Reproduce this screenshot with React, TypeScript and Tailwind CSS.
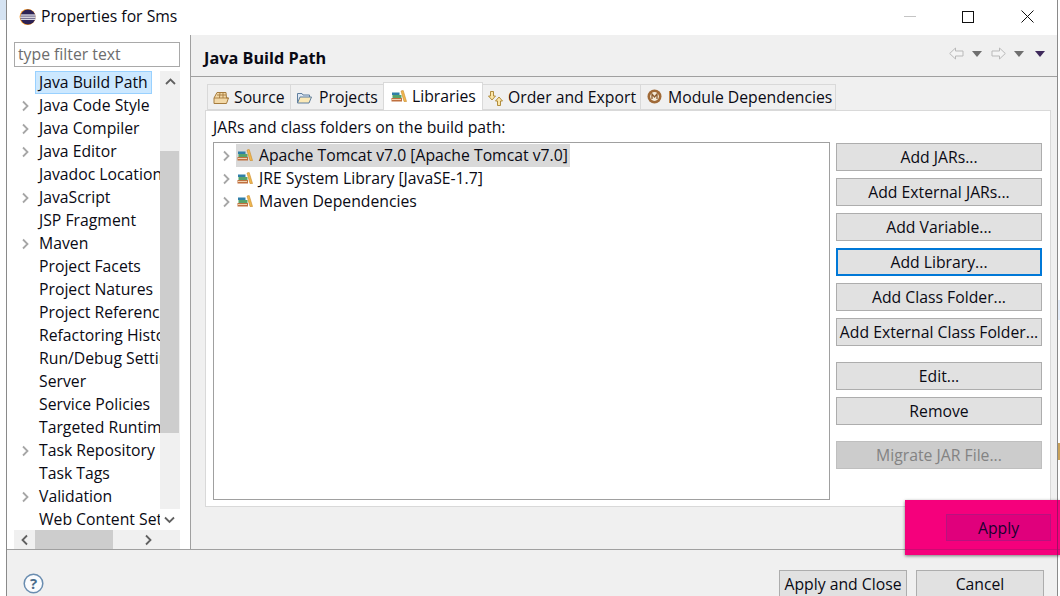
import React from "react";

const treeItems = [
  { label: "Java Build Path", arrow: false, selected: true },
  { label: "Java Code Style", arrow: true },
  { label: "Java Compiler", arrow: true },
  { label: "Java Editor", arrow: true },
  { label: "Javadoc Location", arrow: false },
  { label: "JavaScript", arrow: true },
  { label: "JSP Fragment", arrow: false },
  { label: "Maven", arrow: true },
  { label: "Project Facets", arrow: false },
  { label: "Project Natures", arrow: false },
  { label: "Project References", arrow: false },
  { label: "Refactoring History", arrow: false },
  { label: "Run/Debug Settings", arrow: false },
  { label: "Server", arrow: false },
  { label: "Service Policies", arrow: false },
  { label: "Targeted Runtimes", arrow: false },
  { label: "Task Repository", arrow: true },
  { label: "Task Tags", arrow: false },
  { label: "Validation", arrow: true },
  { label: "Web Content Settings", arrow: false },
];

const Chevron = ({ dir = "right", color = "#a6a6a6" }: { dir?: string; color?: string }) => {
  const d =
    dir === "right"
      ? "M3 1.5 L7.5 6 L3 10.5"
      : dir === "left"
      ? "M8 1.5 L3.5 6 L8 10.5"
      : dir === "up"
      ? "M1 8 L5.5 3.5 L10 8"
      : "M1 3.5 L5.5 8 L10 3.5";
  return (
    <svg width="11" height="12" viewBox="0 0 11 12" fill="none">
      <path d={d} stroke={color} strokeWidth="1.8" />
    </svg>
  );
};

const EclipseLogo = () => (
  <svg width="18" height="18" viewBox="0 0 18 18" className="shrink-0">
    <circle cx="9.6" cy="9" r="8" fill="#f7941e" />
    <circle cx="10" cy="9" r="7.6" fill="#2c2255" />
    <rect x="2.6" y="6.4" width="15" height="1.3" fill="#e8e8f0" />
    <rect x="2.2" y="8.5" width="15.6" height="1.3" fill="#ffffff" />
    <rect x="2.6" y="10.6" width="15" height="1.3" fill="#e8e8f0" />
  </svg>
);

const LibraryIcon = () => (
  <svg width="16" height="16" viewBox="0 0 16 16" className="shrink-0">
    <rect x="1" y="3.5" width="7.5" height="2.5" fill="#2f7fa8" />
    <rect x="1.5" y="6" width="9" height="3" fill="#58a36a" />
    <rect x="0.5" y="9" width="10.5" height="3.5" fill="#c0703f" />
    <rect x="1" y="10" width="9" height="1" fill="#f0d2b0" />
    <path d="M10 2 L12.2 1.5 L15.5 12.5 L13 12.5 Z" fill="#f0b850" stroke="#c98a2a" strokeWidth="0.6" />
  </svg>
);

const SourceIcon = () => (
  <svg width="17" height="16" viewBox="0 0 17 16" className="shrink-0">
    <path d="M1 13.5 L1 8 L4 2.5 L13 2.5 L13.5 8 L15.5 8 L13.5 13.5 Z" fill="#f3d9a8" stroke="#a67c3e" />
    <path d="M4 5 L13 5 M7 2.5 L6.5 8 M10 2.5 L10 8 M1 8 L15.5 8" stroke="#a67c3e" strokeWidth="0.9" />
  </svg>
);

const FolderIcon = () => (
  <svg width="17" height="16" viewBox="0 0 17 16" className="shrink-0">
    <path d="M1.5 13 L1.5 3.5 L6 3.5 L7 5 L13.5 5 L13.5 7" fill="#dfe8f3" stroke="#5f7f9f" />
    <path d="M1.5 13 L4 7 L15.5 7 L13 13 Z" fill="#fbe9b7" stroke="#5f7f9f" />
  </svg>
);

const OrderIcon = () => (
  <svg width="17" height="17" viewBox="0 0 17 17" fill="#fbe6a8" stroke="#a9822e" strokeWidth="0.9" className="shrink-0">
    <path d="M3.5 1.5 L6.5 1.5 L6.5 6 L8.5 6 L5 10 L1.5 6 L3.5 6 Z" />
    <path d="M10.5 15.5 L13.5 15.5 L13.5 11 L15.5 11 L12 7 L8.5 11 L10.5 11 Z" />
  </svg>
);

const ModuleIcon = () => (
  <svg width="15" height="15" viewBox="0 0 15 15" className="mb-[3px] shrink-0">
    <circle cx="7.5" cy="7.5" r="7" fill="#a06a38" />
    <circle cx="7.5" cy="7.5" r="4.4" fill="#f4ead8" />
    <path d="M5 10 L5 5 L7.5 8 L10 5 L10 10" fill="none" stroke="#8a5a2e" strokeWidth="1.3" />
  </svg>
);

const NavArrow = ({ flip = false }: { flip?: boolean }) => (
  <svg width="15" height="13" viewBox="0 0 15 13" className={flip ? "-scale-x-100" : ""}>
    <path d="M0.7 6.5 L6.5 1 L6.5 4 L14 4 L14 9 L6.5 9 L6.5 12 Z" fill="#f4f4f4" stroke="#b9b9b9" />
  </svg>
);

const NavCaret = ({ color = "#6f6f6f" }: { color?: string }) => (
  <svg width="10" height="6" viewBox="0 0 10 6">
    <path d="M0 0 L10 0 L5 6 Z" fill={color} />
  </svg>
);

const Tab = ({
  label,
  icon,
  active,
  className,
}: {
  label: string;
  icon: React.ReactNode;
  active?: boolean;
  className: string;
}) => (
  <div
    className={`flex items-center border border-[#d9d9d9] -mr-px ${className} ${
      active ? "z-10 h-[28px] border-b-0 bg-white" : "h-[26px] bg-[#f0f0f0] pt-[2px]"
    }`}
  >
    {icon}
    <span className="whitespace-nowrap">{label}</span>
  </div>
);

const Button = ({
  label,
  className = "",
  focus,
  disabled,
}: {
  label: string;
  className?: string;
  focus?: boolean;
  disabled?: boolean;
}) => (
  <div
    className={`flex h-[28px] items-center justify-center whitespace-nowrap pt-[2px] ${
      focus
        ? "border-2 border-[#0078d7] bg-[#e1e1e1]"
        : disabled
        ? "border border-[#bfbfbf] bg-[#cccccc] text-[#838383]"
        : "border border-[#adadad] bg-[#e1e1e1]"
    } ${className}`}
  >
    {label}
  </div>
);

export default function App() {
  return (
    <div
      className="relative flex h-[596px] w-[1060px] overflow-hidden bg-white text-[15.75px] text-[#0a0a14]"
      style={{ fontFamily: '"Open Sans", "Noto Sans", sans-serif' }}
    >
      <div className="w-[6px] shrink-0 bg-white">
        <div className="h-[20px] bg-[#d5e3f2]" />
      </div>
      <div className="flex w-[1052px] shrink-0 flex-col border-x border-[#8a8a8a]">
        {/* title bar */}
        <div className="flex h-[35px] shrink-0 items-center bg-white pb-[2px] pl-[11px]">
          <EclipseLogo />
          <span className="ml-[5px]">Properties for Sms</span>
          <div className="ml-auto flex items-center pr-[23px]">
            <div className="h-px w-[12px] bg-[#c4c4c4]" />
            <div className="ml-[46px] h-[12px] w-[12px] border border-[#111]" />
            <svg className="ml-[47px]" width="13" height="13" viewBox="0 0 13 13">
              <path d="M0.5 0.5 L12.5 12.5 M12.5 0.5 L0.5 12.5" stroke="#111" strokeWidth="1" />
            </svg>
          </div>
        </div>

        <div className="flex min-h-0 flex-1">
          {/* left tree */}
          <div className="flex w-[183px] shrink-0 flex-col bg-white pl-[7px] pr-[10px]">
            <div className="mt-[7px] flex h-[25px] shrink-0 items-center border border-[#a9a9a9] pl-[3px] text-[#6d6d6d]">
              type filter text
            </div>
            <div className="mt-[4px] flex h-[459px] shrink-0">
              <div className="w-[146px] overflow-hidden">
                {treeItems.map((item) => (
                  <div key={item.label} className="flex h-[23px] items-center">
                    <span className="flex w-[21px] shrink-0 justify-center pl-[2px]">
                      {item.arrow && <Chevron />}
                    </span>
                    <span
                      className={`flex h-[23px] items-center whitespace-nowrap border px-[3px] ${
                        item.selected ? "border-[#99d1ff] bg-[#cce8ff]" : "border-transparent"
                      }`}
                    >
                      {item.label}
                    </span>
                  </div>
                ))}
              </div>
              <div className="flex w-[20px] shrink-0 flex-col bg-[#f0f0f0]">
                <div className="flex h-[21px] items-center justify-center">
                  <Chevron dir="up" color="#606060" />
                </div>
                <div className="mt-[59px] h-[282px] w-[19px] bg-[#cdcdcd]" />
                <div className="mt-auto flex h-[21px] items-center justify-center bg-white pr-[2px]">
                  <Chevron dir="down" color="#606060" />
                </div>
              </div>
            </div>
            <div className="flex h-[19px] shrink-0 items-center bg-[#f0f0f0]">
              <div className="flex w-[21px] justify-center">
                <Chevron dir="left" color="#606060" />
              </div>
              <div className="h-[19px] w-[78px] bg-[#cdcdcd]" />
              <div className="ml-[25px] flex w-[21px] justify-center">
                <Chevron color="#606060" />
              </div>
            </div>
          </div>

          {/* right pane */}
          <div className="flex min-w-0 flex-1 flex-col border-l border-[#a0a0a0] bg-[#f0f0f0]">
            <div className="flex h-[42px] shrink-0 items-center border-b border-[#a0a0a0] pl-[13px] pr-[12px]">
              <span className="mt-[5px] text-[16.25px] font-bold">Java Build Path</span>
              <div className="mb-[4px] ml-auto flex items-center">
                <NavArrow />
                <span className="ml-[8px]"><NavCaret /></span>
                <span className="ml-[9px]"><NavArrow flip /></span>
                <span className="ml-[8px]"><NavCaret /></span>
                <span className="ml-[11px]"><NavCaret color="#3f2a5c" /></span>
              </div>
            </div>
            <div className="flex h-[33px] shrink-0 items-end pl-[16px]">
              <Tab label="Source" icon={<SourceIcon />} className="w-[84px] gap-[4px] pl-[5px]" />
              <Tab label="Projects" icon={<FolderIcon />} className="w-[94px] gap-[6px] pl-[5px]" />
              <Tab label="Libraries" icon={<LibraryIcon />} className="w-[100px] gap-[5px] pl-[7px]" active />
              <Tab label="Order and Export" icon={<OrderIcon />} className="w-[159px] gap-[4px] pl-[4px]" />
              <Tab label="Module Dependencies" icon={<ModuleIcon />} className="w-[196px] gap-[6px] pl-[6px]" />
            </div>
            <div className="ml-[14px] mr-[6px] flex h-[397px] shrink-0 flex-col border border-[#d9d9d9] bg-white pl-[7px]">
              <div className="mt-[6px] h-[21px] leading-[21px]">JARs and class folders on the build path:</div>
              <div className="mt-[4px] flex">
                <div className="h-[358px] w-[617px] shrink-0 border border-[#a0a0a0] pt-[1px]">
                  {[
                    { label: "Apache Tomcat v7.0 [Apache Tomcat v7.0]", selected: true },
                    { label: "JRE System Library [JavaSE-1.7]" },
                    { label: "Maven Dependencies" },
                  ].map((row) => (
                    <div key={row.label} className="flex h-[23px] items-center pl-[7px]">
                      <span className="flex w-[15px] shrink-0">
                        <Chevron />
                      </span>
                      <span
                        className={`flex h-[23px] items-center gap-[6px] whitespace-nowrap pr-[2px] ${
                          row.selected ? "bg-[#d9d9d9]" : ""
                        }`}
                      >
                        <span className="ml-[1px]">
                          <LibraryIcon />
                        </span>
                        {row.label}
                      </span>
                    </div>
                  ))}
                </div>
                <div className="ml-[6px] mt-[1px] flex w-[206px] shrink-0 flex-col gap-[7px]">
                  <Button label="Add JARs..." />
                  <Button label="Add External JARs..." />
                  <Button label="Add Variable..." />
                  <Button label="Add Library..." focus />
                  <Button label="Add Class Folder..." />
                  <Button label="Add External Class Folder..." />
                  <Button label="Edit..." className="mt-[9px]" />
                  <Button label="Remove" />
                  <Button label="Migrate JAR File..." className="mt-[9px]" disabled />
                </div>
              </div>
            </div>
          </div>
        </div>

        {/* bottom bar */}
        <div className="flex h-[47px] shrink-0 border-t border-[#a0a0a0] bg-[#f0f0f0] pl-[16px] pr-[13px] pt-[20px]">
          <svg className="mt-[3px]" width="21" height="21" viewBox="0 0 21 21">
            <circle cx="10.5" cy="10.5" r="9.3" fill="#fbfcfe" stroke="#6a8db0" strokeWidth="1.5" />
            <text x="10.5" y="16" textAnchor="middle" fontSize="15" fontWeight="700" fill="#4a6c8c">?</text>
          </svg>
          <div className="ml-auto flex gap-[9px]">
            <Button label="Apply and Close" className="w-[128px]" />
            <Button label="Cancel" className="w-[128px]" />
          </div>
        </div>
      </div>
      <div className="flex w-[2px] shrink-0 flex-col bg-white">
        <div className="mt-[300px] h-[20px] bg-[#e6eefa]" />
        <div className="mt-[123px] h-[17px] bg-[#c9a25a]" />
      </div>

      {/* pink highlight over the Apply button */}
      <div className="absolute left-[905px] top-[500px] flex h-[55px] w-[155px] items-center justify-end bg-[#f5007c] pr-[9px] shadow-[0_1px_3px_rgba(0,0,0,0.5)]">
        <div className="flex h-[27px] w-[105px] items-center justify-center border border-[#b8127f] bg-[#e0007c] pt-[2px] text-[#1a0030]">
          Apply
        </div>
        <div className="absolute left-0 right-0 top-[49px] h-px bg-[#cc0a72]" />
        <div className="absolute bottom-0 left-[152px] top-0 w-px bg-[#a01064]" />
      </div>
    </div>
  );
}
